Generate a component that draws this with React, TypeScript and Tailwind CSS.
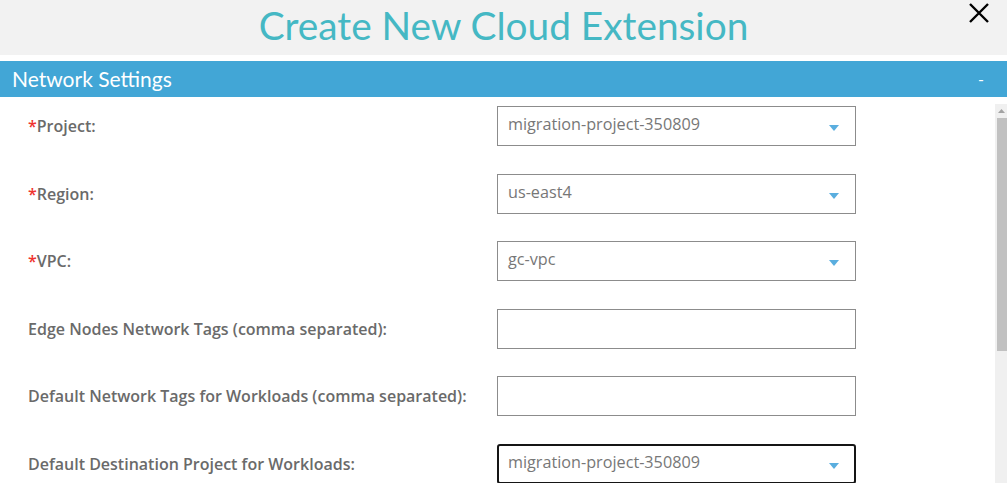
import React from 'react';

type Field = {
  label: string;
  required?: boolean;
  value?: string;
  select?: boolean;
  focused?: boolean;
};

const fields: Field[] = [
  { label: 'Project:', required: true, value: 'migration-project-350809', select: true },
  { label: 'Region:', required: true, value: 'us-east4', select: true },
  { label: 'VPC:', required: true, value: 'gc-vpc', select: true },
  { label: 'Edge Nodes Network Tags (comma separated):' },
  { label: 'Default Network Tags for Workloads (comma separated):' },
  { label: 'Default Destination Project for Workloads:', value: 'migration-project-350809', select: true, focused: true },
];

const CaretDown = () => (
  <svg width="10" height="6" viewBox="0 0 10 6" className="shrink-0 mt-[4px]">
    <path d="M0 0 H10 L5 6 Z" fill="#5aaedf" />
  </svg>
);

const FormRow = ({ field }: { field: Field }) => (
  <div className="flex items-center h-[40px]">
    <div className="w-[469px] text-[16px] font-semibold text-[#6a6a6a]">
      {field.required && <span className="text-[#f0322d]">*</span>}
      {field.label}
    </div>
    <div
      className={`w-[359px] h-[40px] flex items-center justify-between bg-white ${
        field.focused ? 'border-2 border-[#151515] rounded-[3px] pl-[9px] pr-[15px]' : 'border border-[#8c8c8c] pl-[10px] pr-[16px]'
      }`}
    >
      <span className="text-[16.2px] text-[#777] pb-[3px]">{field.value}</span>
      {field.select && <CaretDown />}
    </div>
  </div>
);

export default function App() {
  return (
    <div className="w-[1007px] h-[483px] overflow-hidden bg-white" style={{ fontFamily: '"Open Sans", sans-serif' }}>
      <div className="relative h-[55px] bg-[#f2f2f2] flex items-center justify-center">
        <h1 className="text-[38.8px] text-[#45b8c4] leading-none pb-[4px]" style={{ fontFamily: 'Lato, sans-serif' }}>
          Create New Cloud Extension
        </h1>
        <svg className="absolute right-[17px] top-[3px]" width="22" height="20" viewBox="0 0 22 20">
          <path d="M2 1 L20 19 M20 1 L2 19" stroke="#000" strokeWidth="2.4" />
        </svg>
      </div>

      <div className="mt-[6px] h-[36px] bg-[#42a6d6] flex items-center justify-between pl-[12px] pr-[23px] text-white" style={{ fontFamily: 'Lato, sans-serif' }}>
        <span className="text-[21px]">Network Settings</span>
        <span className="text-[16px]">-</span>
      </div>

      <div className="flex">
        <div className="flex-1 flex flex-col gap-[27.5px] pt-[9px] pl-[28px]">
          {fields.map((f) => (
            <FormRow key={f.label} field={f} />
          ))}
        </div>
        <div className="w-[12px] mt-[7px] h-[400px] bg-[#f0f0f0] flex flex-col items-end">
          <div className="h-[14px] w-full flex items-center justify-center">
            <svg width="7" height="4" viewBox="0 0 7 4">
              <path d="M0 4 L3.5 0 L7 4 Z" fill="#a3a3a3" />
            </svg>
          </div>
          <div className="w-[10px] h-[233px] bg-[#c1c1c1]" />
        </div>
      </div>
    </div>
  );
}
